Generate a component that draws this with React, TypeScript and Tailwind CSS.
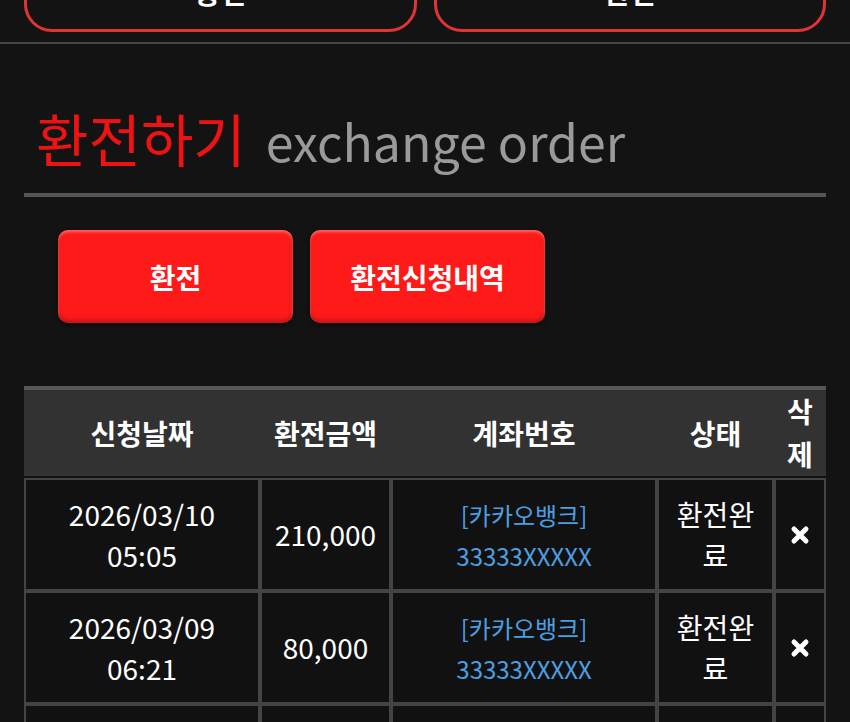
const rows = [
  { date: "2026/03/10", time: "05:05", amount: "210,000", bank: "[카카오뱅크]", account: "33333XXXXX", status: "환전완료" },
  { date: "2026/03/09", time: "06:21", amount: "80,000", bank: "[카카오뱅크]", account: "33333XXXXX", status: "환전완료" },
  { date: "2026/03/08", time: "11:42", amount: "50,000", bank: "[카카오뱅크]", account: "33333XXXXX", status: "환전완료" },
];

const DeleteIcon = () => (
  <svg viewBox="0 0 20 20" className="w-[20px] h-[20px] mx-auto">
    <path d="M4 4L16 16M16 4L4 16" stroke="#fff" strokeWidth="5" strokeLinecap="round" />
  </svg>
);

const App = () => {
  return (
    <div className="min-h-screen bg-[#141314] font-['Noto_Sans_CJK_KR',sans-serif] overflow-hidden">
      {/* top tabs, scrolled partly out of view */}
      <div className="flex gap-[17px] px-6 -mt-[48px]">
        <button className="flex-1 h-[80px] rounded-[28px] border-[3px] border-[#e03434] text-white text-[28px] font-bold">
          충전
        </button>
        <button className="flex-1 h-[80px] rounded-[28px] border-[3px] border-[#e03434] text-white text-[28px] font-bold">
          환전
        </button>
      </div>
      <div className="h-[2px] bg-[#454545] mt-[10px]" />

      <div className="px-6">
        <h2 className="pt-[60px] pb-[20px] px-[12px] flex items-baseline gap-[20px] leading-[66px] border-b-4 border-[#555]">
          <span className="text-[57px] text-[#ee1212]">환전하기</span>
          <span className="text-[50px] text-[#9b9a9b]">exchange order</span>
        </h2>

        <div className="flex gap-[17px] px-[34px] mt-[33px]">
          <button className="w-[235px] h-[93px] rounded-[10px] bg-[#ff1a1a] text-white text-[28px] font-bold shadow-[inset_0_2px_3px_rgba(255,255,255,0.35),inset_0_-3px_4px_rgba(0,0,0,0.25),0_2px_4px_rgba(0,0,0,0.5)]">
            환전
          </button>
          <button className="w-[235px] h-[93px] rounded-[10px] bg-[#ff1a1a] text-white text-[28px] font-bold shadow-[inset_0_2px_3px_rgba(255,255,255,0.35),inset_0_-3px_4px_rgba(0,0,0,0.25),0_2px_4px_rgba(0,0,0,0.5)]">
            환전신청내역
          </button>
        </div>

        <table className="w-full table-fixed border-separate border-spacing-0 mt-[63px] text-white">
          <colgroup>
            <col className="w-[236px]" />
            <col className="w-[131px]" />
            <col className="w-[266px]" />
            <col className="w-[117px]" />
            <col className="w-[52px]" />
          </colgroup>
          <thead>
            <tr className="bg-[#333233] text-[28px] font-bold leading-[43px]">
              <th className="border-t-4 border-t-[#585858] border-b-2 border-b-[#111]">신청날짜</th>
              <th className="border-t-4 border-t-[#585858] border-b-2 border-b-[#111]">환전금액</th>
              <th className="border-t-4 border-t-[#585858] border-b-2 border-b-[#111]">계좌번호</th>
              <th className="border-t-4 border-t-[#585858] border-b-2 border-b-[#111]">상태</th>
              <th className="border-t-4 border-t-[#585858] border-b-2 border-b-[#111] px-[8px]">삭제</th>
            </tr>
          </thead>
          <tbody className="text-[28px] leading-[41px] text-center">
            {rows.map((r, i) => (
              <tr key={i}>
                <td className="h-[113px] border-2 border-[#444] bg-[#121112]">
                  {r.date}
                  <br />
                  {r.time}
                </td>
                <td className="border-2 border-[#444] bg-[#121112]">{r.amount}</td>
                <td className="border-2 border-[#444] bg-[#121112] text-[#4c9fe0] text-[24px]">
                  {r.bank}
                  <br />
                  {r.account}
                </td>
                <td className="border-2 border-[#444] bg-[#121112] px-[14px]">{r.status}</td>
                <td className="border-2 border-[#444] bg-[#121112]">
                  <DeleteIcon />
                </td>
              </tr>
            ))}
          </tbody>
        </table>
      </div>
    </div>
  );
};

export default App;
